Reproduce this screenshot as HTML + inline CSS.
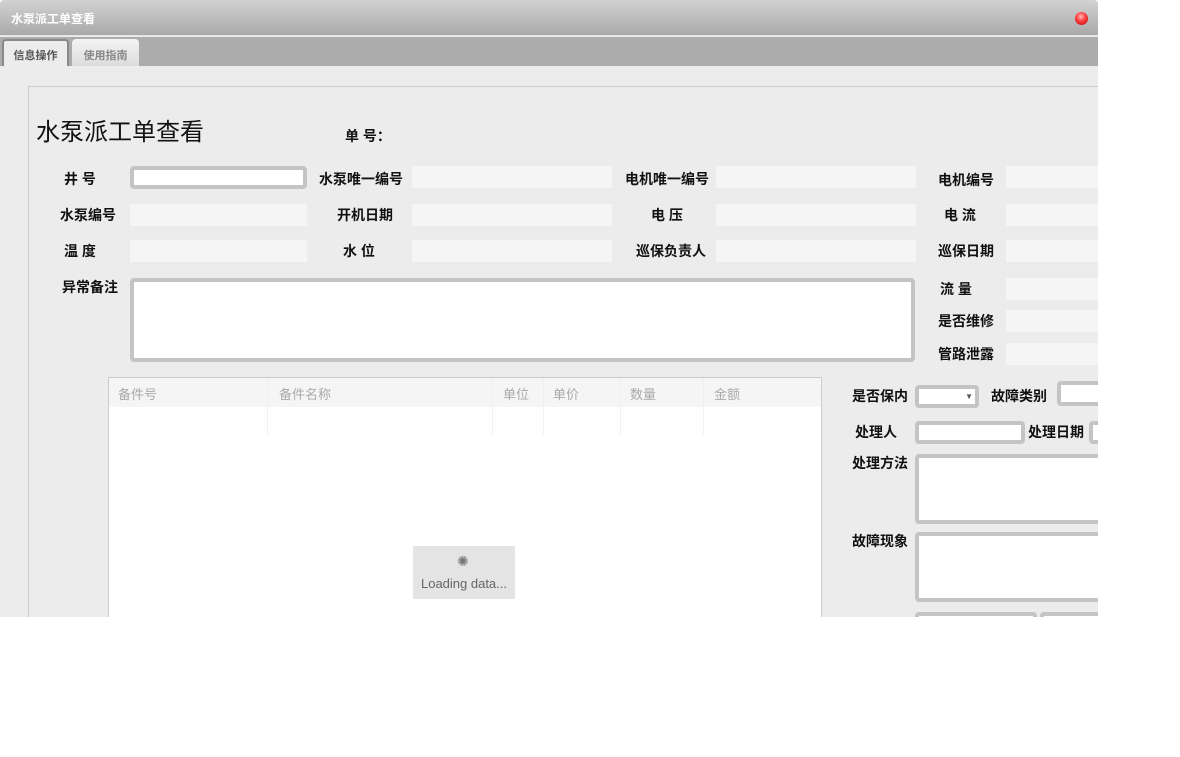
<!DOCTYPE html>
<html><head><meta charset="utf-8"><style>
*{margin:0;padding:0;box-sizing:border-box}
body{width:1180px;height:757px;background:#fff;position:relative;overflow:hidden;font-family:"Liberation Sans","Noto Sans CJK SC",sans-serif}
#win{position:absolute;left:0;top:0;width:1098px;height:617px;background:#ececec;overflow:hidden;border-radius:4px 4px 0 0}
#tb{position:absolute;left:0;top:0;width:1098px;height:36px;background:linear-gradient(#d2d2d2,#a9a9a9);border-bottom:1px solid #e4e4e4}
#tb span{position:absolute;left:11px;top:10px;color:#fff;font-size:12px;font-weight:bold}
#close{position:absolute;left:1075px;top:12px;width:13px;height:13px;border-radius:50%;background:radial-gradient(circle at 45% 35%,#fbb 0,#f44 40%,#b00 100%)}
#tabs{position:absolute;left:0;top:37px;width:1098px;height:29px;background:#acacac}
.tab{position:absolute;top:2px;height:27px;font-size:11px;font-weight:bold;padding-top:6px;text-align:center;border-radius:4px 4px 0 0}
#panel{position:absolute;left:28px;top:86px;width:1100px;height:600px;border:1px solid #ccc;border-right:none}
.l{position:absolute;font-size:14px;font-weight:bold;color:#111;white-space:nowrap;margin-top:-2px}
.f{position:absolute;height:22px;background:#f5f5f5}
.i{position:absolute;border:4px solid #c4c4c4;border-radius:4px;background:#fff}
#grid{position:absolute;left:108px;top:377px;width:714px;height:260px;background:#fff;border:1px solid #ccc}
#gh{height:29px;background:#f5f5f5;position:relative}
#gh span{position:absolute;top:6px;font-size:13px;color:#aaa}
.vl{position:absolute;top:0;height:56px;border-left:1px solid #f0f0f0}
#load{position:absolute;left:413px;top:546px;width:102px;height:53px;background:#e4e4e4;border-radius:2px;font-size:13px;color:#666;text-align:center;padding-top:30px}
</style></head><body>
<div id="win">
<div id="tb"><span>水泵派工单查看</span><div id="close"></div></div>
<div id="tabs">
<div class="tab" style="left:2px;width:67px;background:#ececec;color:#555;border:2px solid #888;border-bottom:none">信息操作</div>
<div class="tab" style="left:72px;width:67px;background:linear-gradient(#f4f4f4,#dcdcdc);color:#888;padding-top:8px">使用指南</div>
</div>
<div id="panel"></div>
<div style="position:absolute;left:36px;top:112px;font-size:24px;color:#111">水泵派工单查看</div>
<div class="l" style="left:345px;top:128px">单 号：</div>

<div class="l" style="left:64px;top:171px">井 号</div>
<div class="i" style="left:130px;top:166px;width:177px;height:23px"></div>
<div class="l" style="left:319px;top:171px">水泵唯一编号</div>
<div class="f" style="left:412px;top:166px;width:200px"></div>
<div class="l" style="left:625px;top:171px">电机唯一编号</div>
<div class="f" style="left:716px;top:166px;width:200px"></div>
<div class="l" style="left:938px;top:172px">电机编号</div>
<div class="f" style="left:1006px;top:166px;width:100px"></div>

<div class="l" style="left:60px;top:207px">水泵编号</div>
<div class="f" style="left:130px;top:204px;width:177px"></div>
<div class="l" style="left:337px;top:207px">开机日期</div>
<div class="f" style="left:412px;top:204px;width:200px"></div>
<div class="l" style="left:651px;top:207px">电 压</div>
<div class="f" style="left:716px;top:204px;width:200px"></div>
<div class="l" style="left:944px;top:207px">电 流</div>
<div class="f" style="left:1006px;top:204px;width:100px"></div>

<div class="l" style="left:64px;top:243px">温 度</div>
<div class="f" style="left:130px;top:240px;width:177px"></div>
<div class="l" style="left:343px;top:243px">水 位</div>
<div class="f" style="left:412px;top:240px;width:200px"></div>
<div class="l" style="left:636px;top:243px">巡保负责人</div>
<div class="f" style="left:716px;top:240px;width:200px"></div>
<div class="l" style="left:938px;top:243px">巡保日期</div>
<div class="f" style="left:1006px;top:240px;width:100px"></div>

<div class="l" style="left:62px;top:279px">异常备注</div>
<div class="i" style="left:130px;top:278px;width:785px;height:84px"></div>
<div class="l" style="left:940px;top:281px">流 量</div>
<div class="f" style="left:1006px;top:278px;width:100px"></div>
<div class="l" style="left:938px;top:313px">是否维修</div>
<div class="f" style="left:1006px;top:310px;width:100px"></div>
<div class="l" style="left:938px;top:346px">管路泄露</div>
<div class="f" style="left:1006px;top:343px;width:100px"></div>

<div id="grid"><div id="gh">
<span style="left:9px">备件号</span><span style="left:170px">备件名称</span><span style="left:394px">单位</span><span style="left:444px">单价</span><span style="left:521px">数量</span><span style="left:605px">金额</span>
<div class="vl" style="left:158px"></div><div class="vl" style="left:383px"></div><div class="vl" style="left:434px"></div><div class="vl" style="left:511px"></div><div class="vl" style="left:594px"></div>
</div></div>
<div id="load"><span style="position:absolute;left:44px;top:7px;font-size:14px;color:#777">✺</span>Loading data...</div>

<div class="l" style="left:852px;top:388px">是否保内</div>
<div class="i" style="left:915px;top:385px;width:64px;height:23px"><span style="position:absolute;right:2px;top:3px;font-size:8px;color:#555">▼</span></div>
<div class="l" style="left:991px;top:388px">故障类别</div>
<div class="i" style="left:1057px;top:381px;width:60px;height:25px"></div>
<div class="l" style="left:855px;top:424px">处理人</div>
<div class="i" style="left:915px;top:421px;width:110px;height:23px"></div>
<div class="l" style="left:1028px;top:424px">处理日期</div>
<div class="i" style="left:1089px;top:421px;width:30px;height:23px"></div>
<div class="l" style="left:852px;top:455px">处理方法</div>
<div class="i" style="left:915px;top:454px;width:200px;height:70px"></div>
<div class="l" style="left:852px;top:533px">故障现象</div>
<div class="i" style="left:915px;top:532px;width:200px;height:70px"></div>
<div class="i" style="left:915px;top:612px;width:122px;height:20px"></div>
<div class="i" style="left:1040px;top:612px;width:70px;height:20px"></div>
</div>
</body></html>
